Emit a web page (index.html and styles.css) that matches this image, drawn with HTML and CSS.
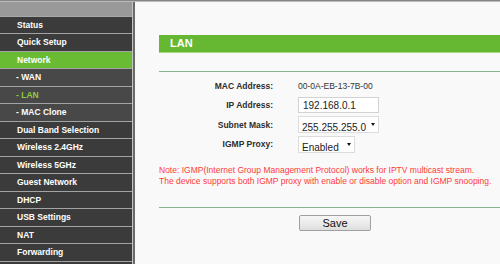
FILE: index.html
```html
<!DOCTYPE html>
<html lang="en">
<head>
    <meta charset="UTF-8">
    <title>LAN</title>
    <link rel="stylesheet" href="styles.css">
</head>
<body>
    <div class="topline"></div>
    <div class="page">
        <nav class="sidebar">
            <div class="menu-head"></div>
            <a href="#" class="menu-item">Status</a>
            <a href="#" class="menu-item">Quick Setup</a>
            <a href="#" class="menu-item open">Network</a>
            <a href="#" class="menu-item sub">- WAN</a>
            <a href="#" class="menu-item sub active">- LAN</a>
            <a href="#" class="menu-item sub">- MAC Clone</a>
            <a href="#" class="menu-item">Dual Band Selection</a>
            <a href="#" class="menu-item">Wireless 2.4GHz</a>
            <a href="#" class="menu-item">Wireless 5GHz</a>
            <a href="#" class="menu-item">Guest Network</a>
            <a href="#" class="menu-item">DHCP</a>
            <a href="#" class="menu-item">USB Settings</a>
            <a href="#" class="menu-item">NAT</a>
            <a href="#" class="menu-item">Forwarding</a>
        </nav>
        <div class="divider"></div>
        <main class="content">
            <div class="title-bar">LAN</div>
            <div class="rule"></div>
            <div class="form-grid">
                <label>MAC Address:</label>
                <span class="value">00-0A-EB-13-7B-00</span>
                <label for="ip">IP Address:</label>
                <input type="text" id="ip" class="field" value="192.168.0.1">
                <label for="mask">Subnet Mask:</label>
                <div class="select mask">
                    <select id="mask"><option>255.255.255.0</option></select>
                </div>
                <label for="igmp">IGMP Proxy:</label>
                <div class="select igmp">
                    <select id="igmp"><option>Enabled</option><option>Disabled</option></select>
                </div>
            </div>
            <p class="note">Note: IGMP(Internet Group Management Protocol) works for IPTV multicast stream.<br>The device supports both IGMP proxy with enable or disable option and IGMP snooping.</p>
            <div class="rule"></div>
            <div class="actions">
                <button>Save</button>
            </div>
        </main>
    </div>
</body>
</html>
```

FILE: styles.css
```css
html, body {
    margin: 0;
    padding: 0;
    height: 100%;
    overflow: hidden;
}
body {
    font-family: "Liberation Sans", Arial, sans-serif;
    background: #f9f9f9;
    color: #333;
}
.topline {
    height: 1px;
    border-top: 1px solid #858585;
    background: #bdbdbd;
}
.page {
    display: flex;
    height: 100%;
}
.sidebar {
    width: 132px;
    flex-shrink: 0;
    background: #3b3b3b;
    display: flex;
    flex-direction: column;
}
.menu-head {
    height: 13.5px;
    background: #999;
    border-bottom: 1px solid #a8a8a8;
}
.menu-item {
    display: block;
    height: 16.5px;
    line-height: 16.5px;
    padding-left: 17px;
    border-bottom: 1px solid #a3a3a3;
    color: #fff;
    font-size: 8.5px;
    font-weight: bold;
    text-decoration: none;
    white-space: nowrap;
}
.menu-item.open {
    background: #69bb33;
}
.menu-item.sub {
    background: #484848;
    padding-left: 16px;
}
.menu-item.active {
    color: #8fcc3c;
}
.divider {
    width: 2px;
    flex-shrink: 0;
    border-left: 1px solid #c4c4c4;
    background: #6a6a6a;
}
.content {
    flex: 1;
    padding: 33px 0 0 24px;
}
.title-bar {
    height: 17px;
    line-height: 17px;
    background: #66b832;
    border-bottom: 1px solid #a9d77f;
    color: #fff;
    font-size: 11px;
    font-weight: bold;
    padding-left: 11px;
}
.rule {
    height: 1px;
    background: #82b48e;
}
.title-bar + .rule {
    margin-top: 18px;
}
.form-grid {
    display: grid;
    grid-template-columns: 114px auto;
    grid-auto-rows: 19.5px;
    column-gap: 25px;
    align-items: center;
    padding-top: 4px;
}
.form-grid label {
    text-align: right;
    font-size: 8.5px;
    font-weight: bold;
    color: #2e2e2e;
}
.value {
    font-size: 8.5px;
    color: #333;
}
.field {
    box-sizing: border-box;
    width: 81px;
    height: 16px;
    border: 1px solid #d2d2d2;
    background: #fff;
    font-family: inherit;
    font-size: 10px;
    color: #222;
    padding: 0 0 0 4px;
    margin: 0;
    outline: none;
}
.select {
    position: relative;
    box-sizing: border-box;
    height: 17px;
    border: 1px solid #dcdcdc;
    background: #fff;
}
.select.mask {
    width: 81px;
}
.select.igmp {
    width: 57px;
}
.select select {
    appearance: none;
    -webkit-appearance: none;
    border: none;
    background: transparent;
    width: 100%;
    height: 100%;
    font-family: inherit;
    font-size: 10px;
    color: #222;
    padding: 0 0 0 3px;
    margin: 0;
    outline: none;
}
.select::after {
    content: "";
    position: absolute;
    right: 3px;
    top: 6px;
    border-left: 2.5px solid transparent;
    border-right: 2.5px solid transparent;
    border-top: 3px solid #111;
    pointer-events: none;
}
.note {
    margin: 11px 0 20px 0;
    font-size: 8.5px;
    line-height: 11px;
    color: #ff3a3a;
    white-space: nowrap;
}
.actions {
    padding: 5px 0 0 140px;
}
.actions button {
    width: 72px;
    height: 16px;
    padding: 0;
    border: 1px solid #a0a0a0;
    border-radius: 2px;
    background: linear-gradient(#f7f7f7, #dedede);
    font-family: inherit;
    font-size: 11px;
    color: #111;
    cursor: pointer;
}
.actions button:hover {
    background: linear-gradient(#ffffff, #e8e8e8);
}
```
